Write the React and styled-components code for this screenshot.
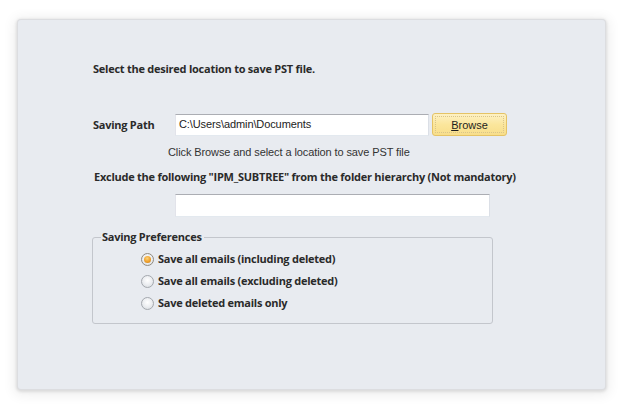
import React from "react";
import styled, { createGlobalStyle } from "styled-components";

const Global = createGlobalStyle`
  html, body { margin: 0; padding: 0; background: #ffffff; }
  body { font-family: "Open Sans", "Liberation Sans", sans-serif; }
`;

const Page = styled.div`
  width: 624px;
  height: 409px;
  padding: 20px 19px 20px 18px;
  box-sizing: border-box;
`;

const Panel = styled.div`
  width: 587px;
  height: 369px;
  box-sizing: border-box;
  background: #e8ebf0;
  border-radius: 3px;
  box-shadow: 0 0 0 1px #dcdde0, 0 1px 3px 2px rgba(0,0,0,0.10), 0 2px 12px 5px rgba(0,0,0,0.06);
  padding: 42px 0 0 75px;
  display: flex;
  flex-direction: column;
  align-items: flex-start;
`;

const Bold = styled.div`
  font-family: "Open Sans", "Liberation Sans", sans-serif;
  font-weight: 700;
  font-size: 11px;
  line-height: 14px;
  color: #2a2a2a;
  white-space: nowrap;
  letter-spacing: -0.25px;
  margin-left: ${p => p.$ml || 0}px;
  margin-top: ${p => p.$mt || 0}px;
`;

const Row = styled.div`
  display: flex;
  align-items: center;
  margin-top: ${p => p.$mt || 0}px;
`;

const Label = styled(Bold)`
  width: 82px;
`;

const TextInput = styled.div`
  width: ${p => p.$w}px;
  height: ${p => p.$h}px;
  box-sizing: border-box;
  background: #ffffff;
  border: 1px solid #abadb3;
  border-color: #abadb3 #dbdfe6 #e3e9ef #e2e3ea;
  font-family: "Liberation Sans", Arial, sans-serif;
  font-size: 11px;
  letter-spacing: -0.1px;
  color: #222;
  padding: 0 0 1px 3px;
  display: flex;
  align-items: center;
  margin-left: ${p => p.$ml || 0}px;
  margin-top: ${p => p.$mt || 0}px;
`;

const Button = styled.div`
  width: 75px;
  height: 23px;
  box-sizing: border-box;
  margin-left: 3px;
  border: 1px solid #e5c365;
  border-radius: 3px;
  background: linear-gradient(#fdf1c4 0%, #fbe69c 50%, #f8de8a 100%);
  display: flex;
  align-items: center;
  justify-content: center;
  position: relative;
  font-family: "Liberation Sans", Arial, sans-serif;
  font-size: 11px;
  color: #1e1e1e;
  &::after {
    content: "";
    position: absolute;
    inset: 2px;
    border: 1px dotted #d9c48a;
  }
  u { text-decoration: underline; }
`;

const Hint = styled.div`
  font-family: "Liberation Sans", Arial, sans-serif;
  font-size: 11px;
  letter-spacing: -0.1px;
  line-height: 14px;
  color: #333;
  margin-left: 75px;
  margin-top: 9px;
  white-space: nowrap;
`;

const Group = styled.fieldset`
  margin: 13px 0 0 -1px;
  width: 401px;
  height: 94px;
  box-sizing: border-box;
  border: 1px solid #c3c6cc;
  border-radius: 3px;
  padding: 8px 0 0 8px;
  display: flex;
  flex-direction: column;
  gap: 8px;
`;

const Legend = styled.legend`
  font-family: "Open Sans", "Liberation Sans", sans-serif;
  font-weight: 700;
  font-size: 11px;
  line-height: 14px;
  letter-spacing: -0.25px;
  color: #2a2a2a;
  padding: 0 2px 0 1px;
  margin-left: 0;
`;

const Option = styled.div`
  display: flex;
  align-items: center;
  height: 14px;
  gap: 4px;
  margin-left: 40px;
`;

const Radio = styled.span`
  width: 13px;
  height: 13px;
  box-sizing: border-box;
  border-radius: 50%;
  border: 1px solid ${p => (p.$on ? "#8f8a80" : "#a4a8ae")};
  background: radial-gradient(circle at 50% 40%, #ffffff 0%, #eceef1 50%, #d4d8dc 100%);
  display: flex;
  align-items: center;
  justify-content: center;
  &::after {
    content: "";
    display: ${p => (p.$on ? "block" : "none")};
    width: 7px;
    height: 7px;
    border-radius: 50%;
    background: radial-gradient(circle at 45% 35%, #fbd27a 0%, #f0a430 50%, #c9780e 100%);
  }
`;

export default function App() {
  return (
    <>
      <Global />
      <Page>
        <Panel>
          <Bold>Select the desired location to save PST file.</Bold>
          <Row $mt={37}>
            <Label>Saving Path</Label>
            <TextInput $w={254} $h={22}>C:\Users\admin\Documents</TextInput>
            <Button><span><u>B</u>rowse</span></Button>
          </Row>
          <Hint>Click Browse and select a location to save PST file</Hint>
          <Bold $ml={1} $mt={11}>Exclude the following "IPM_SUBTREE" from the folder hierarchy (Not mandatory)</Bold>
          <TextInput $w={315} $h={23} $ml={82} $mt={10} />
          <Group>
            <Legend>Saving Preferences</Legend>
            <Option><Radio $on /><Bold>Save all emails (including deleted)</Bold></Option>
            <Option><Radio /><Bold>Save all emails (excluding deleted)</Bold></Option>
            <Option><Radio /><Bold>Save deleted emails only</Bold></Option>
          </Group>
        </Panel>
      </Page>
    </>
  );
}
